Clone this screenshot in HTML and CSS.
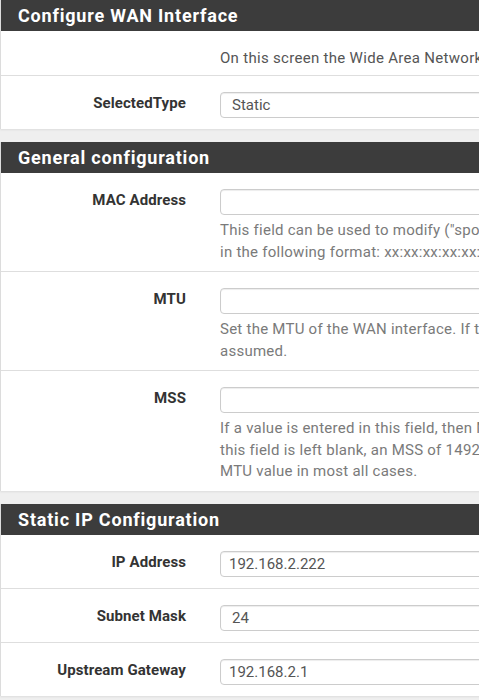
FILE: index.html
```html
<!DOCTYPE html>
<html lang="en">
<head>
<meta charset="utf-8">
<title>Configure WAN Interface</title>
<link rel="stylesheet" href="styles.css">
</head>
<body>
<div class="page">
  <section class="panel">
    <h2 class="panel-title">Configure WAN Interface</h2>
    <div class="row row-desc">
      <div class="label"></div>
      <div class="content"><p class="desc">On this screen the Wide Area Network information will be configured.</p></div>
    </div>
    <div class="row row-field">
      <div class="label">SelectedType</div>
      <div class="content"><div class="input select">Static</div></div>
    </div>
  </section>

  <section class="panel">
    <h2 class="panel-title">General configuration</h2>
    <div class="row row-help">
      <div class="label">MAC Address</div>
      <div class="content">
        <div class="input"></div>
        <p class="help">This field can be used to modify ("spoof") the MAC address of the WAN interface. Enter a MAC address<br>in the following format: xx:xx:xx:xx:xx:xx or leave blank.</p>
      </div>
    </div>
    <div class="row row-help">
      <div class="label">MTU</div>
      <div class="content">
        <div class="input"></div>
        <p class="help">Set the MTU of the WAN interface. If this field is left blank, an MTU of 1492 bytes for PPPoE<br>assumed.</p>
      </div>
    </div>
    <div class="row row-help">
      <div class="label">MSS</div>
      <div class="content">
        <div class="input"></div>
        <p class="help">If a value is entered in this field, then MSS clamping for TCP connections to the value entered<br>this field is left blank, an MSS of 1492 bytes for PPPoE and 1500 bytes for all other connection<br>MTU value in most all cases.</p>
      </div>
    </div>
  </section>

  <section class="panel">
    <h2 class="panel-title">Static IP Configuration</h2>
    <div class="row row-field">
      <div class="label">IP Address</div>
      <div class="content"><div class="input ip">192.168.2.222</div></div>
    </div>
    <div class="row row-field">
      <div class="label">Subnet Mask</div>
      <div class="content"><div class="input mask">24</div></div>
    </div>
    <div class="row row-field">
      <div class="label">Upstream Gateway</div>
      <div class="content"><div class="input ip">192.168.2.1</div></div>
    </div>
  </section>
</div>
</body>
</html>
```

FILE: styles.css
```css
html, body {
  margin: 0;
  padding: 0;
}
body {
  background: #efefef;
  font-family: Roboto, "Liberation Sans", Arial, sans-serif;
  color: #333;
  overflow: hidden;
  width: 479px;
  height: 700px;
}
.page {
  width: 820px;
}
.panel {
  background: #fff;
  border-left: 1px solid #dcdcdc;
  margin-bottom: 13px;
  box-shadow: 0 1px 2px rgba(0,0,0,0.08);
}
.panel-title {
  margin: 0;
  height: 31px;
  line-height: 31px;
  background: #3c3c3c;
  color: #fff;
  font-size: 18px;
  font-weight: 700;
  letter-spacing: 0.8px;
  padding-left: 17px;
}
.row {
  display: grid;
  grid-template-columns: 185px 1fr;
  column-gap: 34px;
  border-bottom: 1px solid #dedede;
}
.panel .row:last-child {
  border-bottom: none;
}
.label {
  text-align: right;
  font-weight: 700;
  font-size: 15px;
  line-height: 20px;
  letter-spacing: 0.1px;
  color: #333;
  padding-top: 1px;
}
.row-desc {
  padding: 17px 0 7px;
}
.desc {
  margin: 0;
  font-size: 15px;
  line-height: 20px;
  letter-spacing: 0.3px;
  color: #555;
  white-space: nowrap;
}
.row-field {
  padding: 16px 0 11px;
}
.row-help {
  padding: 16px 0 8px;
}
.input {
  height: 24px;
  border: 1px solid #ccc;
  border-radius: 4px;
  box-shadow: inset 0 1px 1px rgba(0,0,0,0.075);
  font-size: 15px;
  line-height: 24px;
  color: #555;
  padding-left: 10px;
  box-sizing: content-box;
}
.select {
  padding-left: 11px;
}
.ip {
  padding-left: 8px;
}
.mask {
  padding-left: 11px;
}
.help {
  margin: 5px 0 0;
  font-size: 15px;
  line-height: 21.5px;
  letter-spacing: 0.25px;
  color: #7a7a7a;
  white-space: nowrap;
}
```
